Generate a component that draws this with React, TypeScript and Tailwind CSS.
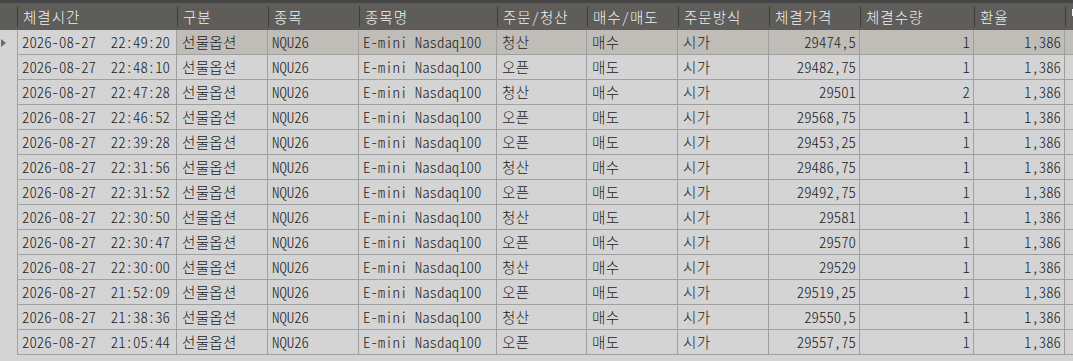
const kr = { fontFamily: '"Noto Sans CJK KR", "Liberation Sans", sans-serif' }

interface Fill {
  time: string
  side: string
  dir: string
  price: string
  qty: string
}

const fills: Fill[] = [
  { time: '22:49:20', side: '청산', dir: '매수', price: '29474,5', qty: '1' },
  { time: '22:48:10', side: '오픈', dir: '매도', price: '29482,75', qty: '1' },
  { time: '22:47:28', side: '청산', dir: '매수', price: '29501', qty: '2' },
  { time: '22:46:52', side: '오픈', dir: '매도', price: '29568,75', qty: '1' },
  { time: '22:39:28', side: '오픈', dir: '매도', price: '29453,25', qty: '1' },
  { time: '22:31:56', side: '청산', dir: '매수', price: '29486,75', qty: '1' },
  { time: '22:31:52', side: '오픈', dir: '매도', price: '29492,75', qty: '1' },
  { time: '22:30:50', side: '청산', dir: '매도', price: '29581', qty: '1' },
  { time: '22:30:47', side: '오픈', dir: '매수', price: '29570', qty: '1' },
  { time: '22:30:00', side: '청산', dir: '매수', price: '29529', qty: '1' },
  { time: '21:52:09', side: '오픈', dir: '매도', price: '29519,25', qty: '1' },
  { time: '21:38:36', side: '청산', dir: '매수', price: '29550,5', qty: '1' },
  { time: '21:05:44', side: '오픈', dir: '매도', price: '29557,75', qty: '1' },
]

const headers = [
  { label: '체결시간', w: 'w-[160px]' },
  { label: '구분', w: 'w-[91px]' },
  { label: '종목', w: 'w-[91px]' },
  { label: '종목명', w: 'w-[138px]' },
  { label: '주문/청산', w: 'w-[90px]' },
  { label: '매수/매도', w: 'w-[91px]' },
  { label: '주문방식', w: 'w-[91px]' },
  { label: '체결가격', w: 'w-[91px]' },
  { label: '체결수량', w: 'w-[114px]' },
  { label: '환율', w: 'w-[91px]' },
]

// korean text cell
function K({ w, children }: { w: string; children: React.ReactNode }) {
  return (
    <div className={`${w} shrink-0 h-full border-r border-[#a0a0a0] flex items-center pl-[5px] whitespace-nowrap overflow-hidden text-[14.5px] tracking-[0.3px] font-light`}>
      {children}
    </div>
  )
}

// ascii text cell, half-width fixed pitch
function A({ w, right, children }: { w: string; right?: boolean; children: React.ReactNode }) {
  return (
    <div
      className={`${w} shrink-0 h-full border-r border-[#a0a0a0] flex items-center whitespace-pre overflow-hidden text-[14.8px] font-light [font-feature-settings:'hwid'_1] ${
        right ? 'justify-end pr-[3px]' : 'pl-[4px]'
      }`}
    >
      {children}
    </div>
  )
}

export default function App() {
  return (
    <div className="w-[1073px] h-[361px] bg-[#d4d4d4] overflow-hidden" style={kr}>
      <div className="h-[3px] bg-[#454545]" />
      {/* header */}
      <div className="h-[27px] bg-[#5e5d5a] flex text-[14.5px] font-light tracking-[1px] text-[#f2f2f2] [font-feature-settings:'hwid'_1]">
        <div className="w-[18px] shrink-0 flex items-center justify-end">
          <div className="w-px h-[21px] bg-[#3c3c3c]" />
        </div>
        {headers.map((h) => (
          <div key={h.label} className={`${h.w} shrink-0 flex items-center`}>
            <span className="pl-[5px] whitespace-nowrap">{h.label}</span>
            <div className="ml-auto w-px h-[21px] bg-[#3c3c3c]" />
          </div>
        ))}
        <div className="flex-1 flex items-start pt-[6px] pl-[6px]">
          <div className="w-[3px] h-[7px] bg-[#f2f2f2]" />
        </div>
      </div>
      {/* rows */}
      <div className="flex text-[#1c1c1c]">
        <div className="w-[18px] shrink-0 border-r border-[#a0a0a0] h-[325px]">
          <div className="h-[25px] flex items-center pl-px">
            <svg width="6" height="8" viewBox="0 0 6 8">
              <path d="M0 0 L5 4 L0 8 Z" fill="#6a6a6a" />
            </svg>
          </div>
        </div>
        <div className="flex-1">
          {fills.map((f, i) => {
            const sel = i === 0
            return (
              <div
                key={f.time}
                className={`h-[25px] flex border-b border-[#a0a0a0] ${sel ? 'bg-[#c0bcb8]' : 'bg-[#d4d4d4]'}`}
              >
                <div className="w-[159px] shrink-0 h-full border-r border-[#a0a0a0] bg-[#d4d4d4] flex items-center pl-[4px] whitespace-pre text-[14.8px] font-light [font-feature-settings:'hwid'_1]">
                  {'2026-08-27  ' + f.time}
                </div>
                <K w="w-[91px]">선물옵션</K>
                <A w="w-[91px]">NQU26</A>
                <A w="w-[138px]">E-mini Nasdaq100</A>
                <K w="w-[90px]">{f.side}</K>
                <K w="w-[91px]">{f.dir}</K>
                <K w="w-[91px]">시가</K>
                <A w="w-[91px]" right>{f.price}</A>
                <A w="w-[114px]" right>{f.qty}</A>
                <A w="w-[91px]" right>1,386</A>
                <div className="flex-1" />
              </div>
            )
          })}
        </div>
      </div>
    </div>
  )
}
